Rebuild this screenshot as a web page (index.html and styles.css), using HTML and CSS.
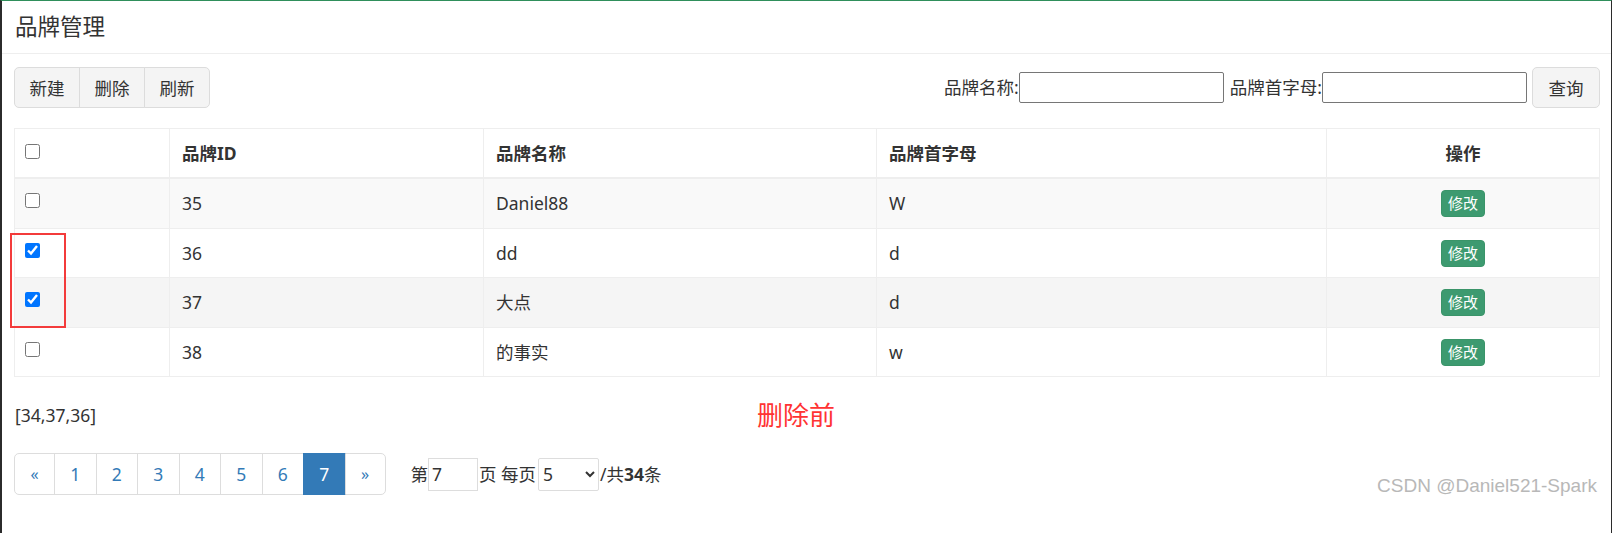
FILE: index.html
```html
<!DOCTYPE html>
<html lang="zh-CN">
<head>
  <meta charset="UTF-8" />
  <meta name="viewport" content="width=device-width, initial-scale=1.0"/>
  <title>品牌管理</title>
  <link rel="stylesheet" href="styles.css">
</head>
<body>
  <div class="page">
    <div class="page-head">品牌管理</div>

    <div class="page-body">
      <div class="toolbar">
        <div class="btn-group">
          <button class="btn">新建</button>
          <button class="btn">删除</button>
          <button class="btn">刷新</button>
        </div>
        <form class="search">
          <label>品牌名称:</label>
          <input type="text" class="search-input" />
          <label class="gap">品牌首字母:</label>
          <input type="text" class="search-input" />
          <button type="button" class="btn btn-query">查询</button>
        </form>
      </div>

      <table class="brand-table">
        <colgroup>
          <col class="col-check">
          <col class="col-id">
          <col class="col-name">
          <col class="col-letter">
          <col>
        </colgroup>
        <thead>
          <tr>
            <th><input type="checkbox" class="check" /></th>
            <th>品牌ID</th>
            <th>品牌名称</th>
            <th>品牌首字母</th>
            <th class="center">操作</th>
          </tr>
        </thead>
        <tbody>
          <tr class="striped">
            <td><input type="checkbox" class="check" /></td>
            <td>35</td>
            <td>Daniel88</td>
            <td>W</td>
            <td class="center"><button class="btn-edit">修改</button></td>
          </tr>
          <tr>
            <td><input type="checkbox" class="check" checked /></td>
            <td>36</td>
            <td>dd</td>
            <td>d</td>
            <td class="center"><button class="btn-edit">修改</button></td>
          </tr>
          <tr class="hovered">
            <td><input type="checkbox" class="check" checked /></td>
            <td>37</td>
            <td>大点</td>
            <td>d</td>
            <td class="center"><button class="btn-edit">修改</button></td>
          </tr>
          <tr>
            <td><input type="checkbox" class="check" /></td>
            <td>38</td>
            <td>的事实</td>
            <td>w</td>
            <td class="center"><button class="btn-edit">修改</button></td>
          </tr>
        </tbody>
      </table>

      <div class="selected">
        <span>[34,37,36]</span>
        <span class="note">删除前</span>
      </div>

      <div class="pager">
        <ul class="pagination">
          <li class="edge"><a href="#">&laquo;</a></li>
          <li><a href="#">1</a></li>
          <li><a href="#">2</a></li>
          <li><a href="#">3</a></li>
          <li><a href="#">4</a></li>
          <li><a href="#">5</a></li>
          <li><a href="#">6</a></li>
          <li class="active"><a href="#">7</a></li>
          <li class="edge"><a href="#">&raquo;</a></li>
        </ul>
        <div class="pager-info">
          <span>第</span>
          <input type="text" class="page-input" value="7" />
          <span class="after-input">页 每页</span>
          <select class="page-size">
            <option>5</option>
            <option>10</option>
            <option>20</option>
          </select>
          <span>/共<b>34</b>条</span>
        </div>
      </div>
    </div>

    <!-- пометка на скриншоте -->
    <div class="mark-box"></div>
    <div class="watermark">CSDN @Daniel521-Spark</div>
  </div>
</body>
</html>
```

FILE: styles.css
```css
body {
  margin: 0;
  font-family: "Noto Sans", "Noto Sans CJK SC", sans-serif;
  font-size: 17.5px;
  line-height: 25px;
  color: #333;
  background-color: #fff;
}

.page {
  position: relative;
  box-sizing: border-box;
  width: 1612px;
  height: 533px;
  border-top: 1px solid #2f8f5b;
  border-left: 2px solid #2b2b2b;
  border-right: 1px solid #2b2b2b;
  overflow: hidden;
}

.page-head {
  padding: 12px 13px;
  font-size: 22.5px;
  line-height: 28px;
  border-bottom: 1px solid #eee;
}

.page-body {
  padding: 13px 11px 0 12px;
}

.toolbar {
  display: flex;
  justify-content: space-between;
  align-items: center;
}

.btn {
  height: 41px;
  padding: 0 15px;
  font-family: inherit;
  font-size: 17.5px;
  color: #333;
  white-space: nowrap;
  background-color: #f4f4f4;
  border: 1px solid #dcdcdc;
  border-radius: 5px;
  cursor: pointer;
}

.btn-group {
  display: flex;
}

.btn-group .btn {
  width: 66px;
  padding: 0;
  border-radius: 0;
  margin-left: -1px;
}

.btn-group .btn:first-child {
  margin-left: 0;
  border-radius: 5px 0 0 5px;
}

.btn-group .btn:last-child {
  border-radius: 0 5px 5px 0;
}

.search {
  display: flex;
  align-items: center;
  margin: 0;
}

.search label.gap {
  margin-left: 6px;
}

.search-input {
  box-sizing: border-box;
  width: 205px;
  height: 31px;
  margin: 0;
  border: 1px solid #767676;
  border-radius: 2px;
}

.btn-query {
  width: 68px;
  padding: 0;
  margin-left: 5px;
}

.brand-table {
  width: 1586px;
  margin-top: 20px;
  table-layout: fixed;
  border-collapse: collapse;
  border: 1px solid #eee;
}

.col-check { width: 155px; }
.col-id { width: 314px; }
.col-name { width: 393px; }
.col-letter { width: 450px; }

th, td {
  padding: 11px 12px 10.5px 12px;
  border: 1px solid #eee;
  text-align: left;
  vertical-align: top;
}

th {
  padding: 12px 12px;
  font-weight: bold;
  line-height: 24px;
  border-bottom: 2px solid #eee;
}

td {
  line-height: 27px;
}

th.center, td.center {
  text-align: center;
}

tr.striped td {
  background-color: #f9f9f9;
}

tr.hovered td {
  background-color: #f5f5f5;
}

.check {
  width: 15px;
  height: 15px;
  margin: 3px 0 0 -2px;
  vertical-align: top;
}

th .check {
  margin-top: 3px;
}

.btn-edit {
  height: 27px;
  padding: 0 6px;
  font-family: inherit;
  font-size: 15px;
  line-height: 25px;
  color: #fff;
  background-color: #3d9a70;
  border: 1px solid #3a9469;
  border-radius: 4px;
  vertical-align: top;
}

.selected {
  display: flex;
  align-items: center;
  height: 34px;
  margin-top: 21px;
  padding-left: 1px;
}

.note {
  margin-left: 661px;
  font-size: 26px;
  color: #ff3333;
}

.pager {
  display: flex;
  align-items: center;
  margin-top: 21px;
}

.pagination {
  display: flex;
  margin: 0;
  padding: 0;
  list-style: none;
}

.pagination li a {
  display: block;
  box-sizing: border-box;
  width: 42.5px;
  height: 42px;
  margin-left: -1px;
  line-height: 40px;
  text-align: center;
  color: #337ab7;
  text-decoration: none;
  border: 1px solid #ddd;
}

.pagination li.edge a {
  width: 41px;
  font-size: 16px;
}

.pagination li:first-child a {
  margin-left: 0;
  border-radius: 5px 0 0 5px;
}

.pagination li:last-child a {
  border-radius: 0 5px 5px 0;
}

.pagination li.active a {
  color: #fff;
  background-color: #337ab7;
  border-color: #337ab7;
}

.pager-info {
  display: flex;
  align-items: center;
  margin-left: 25px;
}

.page-input {
  box-sizing: border-box;
  width: 50px;
  height: 33px;
  margin: 0;
  padding: 0 3px;
  font-family: inherit;
  font-size: 17.5px;
  color: #333;
  border: 1px solid #ddd;
}

.after-input {
  margin: 0 2px 0 1px;
}

.page-size {
  box-sizing: border-box;
  width: 61px;
  height: 33px;
  margin: 0 1px 0 0;
  font-family: inherit;
  font-size: 17.5px;
  color: #333;
  background-color: #fff;
  border: 1px solid #ddd;
  border-radius: 2px;
}

.mark-box {
  position: absolute;
  left: 8px;
  top: 232px;
  width: 52px;
  height: 91px;
  border: 2px solid #f33b3b;
}

.watermark {
  position: absolute;
  right: 14px;
  bottom: 36px;
  font-family: "Liberation Sans", Arial, sans-serif;
  font-size: 19px;
  line-height: 22px;
  color: #b8b8b8;
}
```
